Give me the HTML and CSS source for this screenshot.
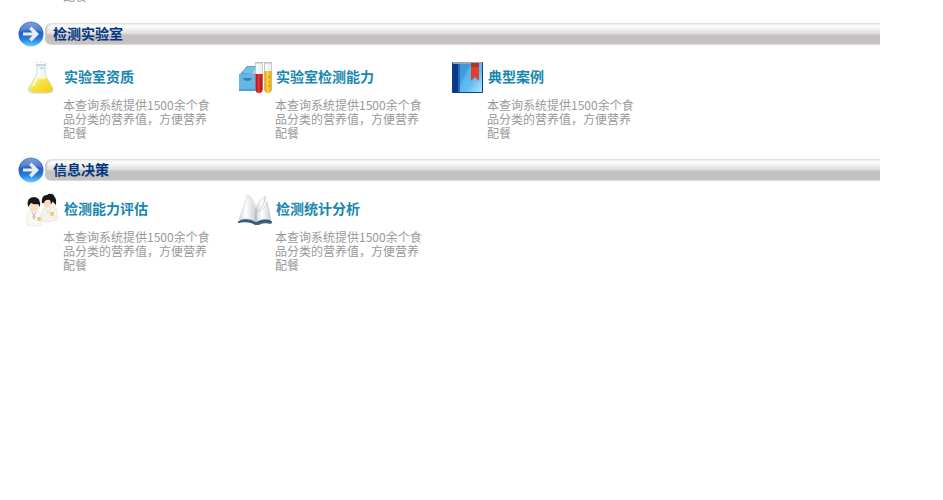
FILE: index.html
```html
<!DOCTYPE html>
<html lang="zh-CN">
<head>
<meta charset="utf-8">
<title>检测实验室</title>
<link rel="stylesheet" href="styles.css">
</head>
<body>
<svg class="defs" aria-hidden="true">
  <defs>
    <linearGradient id="blue" x1="0" y1="0" x2="0" y2="1"><stop offset="0" stop-color="#6b93d6"/><stop offset=".45" stop-color="#2460c4"/><stop offset=".7" stop-color="#247ce0"/><stop offset="1" stop-color="#62d4ff"/></linearGradient>
    <symbol id="arrow" viewBox="0 0 26 26">
      <circle cx="13" cy="13" r="12.5" fill="url(#blue)"/>
      <path d="M2 11C4 4 9 2 13 2s9 2 11 9c-6-3-16-3-22 0z" fill="#fff" opacity=".15"/>
      <path d="M5 11.500h9.500L11 8l2.500-2.500L21 13l-7.500 7.500L11 18l3.500-3.500H5z" fill="#e9edf8"/>
    </symbol>
  </defs>
</svg>
<main class="page">
  <p class="previous">配餐</p>

  <section class="section">
    <header class="head">
      <svg class="arrow" aria-hidden="true"><use href="#arrow"/></svg>
      <h2 class="bar">检测实验室</h2>
    </header>
    <div class="grid">
      <article class="card">
        <svg class="icon" viewBox="0 0 34 34" aria-hidden="true">
          <defs><linearGradient id="yellow" x1="0" y1="0" x2="1" y2="1"><stop offset="0" stop-color="#fff6a0"/><stop offset=".5" stop-color="#f6e03c"/><stop offset="1" stop-color="#f5cc12"/></linearGradient></defs>
          <ellipse cx="14" cy="30" rx="13" ry="2" fill="#f4efd5"/>
          <path d="M10 3v9L1.500 26q-1.500 4 3 4.500 9 1 18 0 4.500-.5 3-4.500L18 12V3z" fill="#f1f8f8" stroke="#c6dcdc"/>
          <path d="M7.500 16Q14 14 20 16l5.500 10q1 3.500-3 4-8 1-17 0-4.500-.5-3-4z" fill="url(#yellow)"/>
          <ellipse cx="14" cy="16" rx="6" ry="1.200" fill="#fff7ad"/>
          <path d="M9 3h10M11 6h6" stroke="#a4c4ca"/>
          <path d="M12 4v8L6 24" stroke="#fff" stroke-width="2" fill="none" opacity=".7"/>
          <path d="M9 .5h2m2-.5h2m2 1h3" stroke="#ddd"/>
        </svg>
        <div class="body"><h3><a href="#lab">实验室资质</a></h3><p>本查询系统提供1500余个食品分类的营养值，方便营养配餐</p></div>
      </article>
      <article class="card">
        <svg class="icon" viewBox="0 0 34 34" aria-hidden="true">
          <defs>
            <linearGradient id="red"><stop offset="0" stop-color="#a90d16"/><stop offset=".45" stop-color="#e33a35"/><stop offset="1" stop-color="#b90b13"/></linearGradient>
            <linearGradient id="gold"><stop offset="0" stop-color="#e69c05"/><stop offset=".45" stop-color="#ffd44b"/><stop offset="1" stop-color="#e7a310"/></linearGradient>
          </defs>
          <path d="M1 12L8 4h12v24H1z" fill="#4aa3db"/>
          <path d="M5 11l4-4h11v5z" fill="#d8c7a8"/>
          <path d="M4 9l5-4h9l-5 6H4z" fill="#75bfe9"/>
          <path d="M0 12h17v17H0z" fill="#65b6e7"/>
          <path d="M0 28h17" stroke="#388bc2"/>
          <path d="M4 16q1 3 4.500 3t4.500-3z" fill="#3780b2"/>
          <path d="M16.500 1v26q0 4 3.500 4t3.500-4V1z" fill="#eef2f3" stroke="#aebfc4" stroke-width=".7"/>
          <path d="M16.500 12h7v15q0 4-3.500 4t-3.500-4z" fill="url(#red)"/>
          <path d="M25.500 1v26q0 4 3.500 4t3.500-4V1z" fill="#eef2f3" stroke="#b8b8a5" stroke-width=".7"/>
          <path d="M25.500 9h7v18q0 4-3.500 4t-3.500-4z" fill="url(#gold)"/>
          <path d="M16 .5h8M25 .5h8" stroke="#b7c2c5"/>
          <path d="M18.500 2v9M27.500 2v7" stroke="#fff" stroke-width="1.500"/>
          <path d="M21 16v2m0 3v1m0 3v2M30 14v2m0 3v1m0 3v2" stroke="#642713" opacity=".4"/>
        </svg>
        <div class="body"><h3><a href="#ability">实验室检测能力</a></h3><p>本查询系统提供1500余个食品分类的营养值，方便营养配餐</p></div>
      </article>
      <article class="card">
        <svg class="icon" viewBox="0 0 34 34" aria-hidden="true">
          <defs><linearGradient id="book" x1="0" y1="0" x2="1" y2="1"><stop offset="0" stop-color="#4aa8e4"/><stop offset=".6" stop-color="#63bdf2"/><stop offset="1" stop-color="#b0e6ff"/></linearGradient></defs>
          <rect x="1" y="0" width="31" height="31" rx="1" fill="#0c4185"/>
          <path d="M2 0h29v2H2z" fill="#8fa6bd"/>
          <path d="M2 2h6v28H2z" fill="#0a3a87"/>
          <path d="M7 2h2v28H7z" fill="#2868b5"/>
          <path d="M9 2h22v28H9z" fill="url(#book)"/>
          <path d="M9 2h11L9 23z" fill="#247dca" opacity=".4"/>
          <path d="M20 1h8v18l-4-4-4 4z" fill="#df3f2c"/>
          <path d="M20 1h8v4h-8z" fill="#b82d24"/>
        </svg>
        <div class="body"><h3><a href="#cases">典型案例</a></h3><p>本查询系统提供1500余个食品分类的营养值，方便营养配餐</p></div>
      </article>
    </div>
  </section>

  <section class="section">
    <header class="head">
      <svg class="arrow" aria-hidden="true"><use href="#arrow"/></svg>
      <h2 class="bar">信息决策</h2>
    </header>
    <div class="grid compact">
      <article class="card">
        <svg class="icon" viewBox="0 0 34 34" aria-hidden="true">
          <path d="M15 27V17q1-4 5-4h5q5 0 5 5v8q-7 3-15 1z" fill="#f4f2eb" stroke="#dfddd8" stroke-width=".6"/>
          <path d="M26 2q4 1 3 9l-3-3z" fill="#171717"/>
          <ellipse cx="20.500" cy="8.500" rx="4.500" ry="5" fill="#f8dcc1"/>
          <path d="M15 9Q14 1 20 1q2-2 5-1 3 1 2 4-1 4-3 6l-1-4q-5-1-6 3z" fill="#171717"/>
          <path d="M19 14l2 5 2-5" fill="#fff" stroke="#c9c9c9" stroke-width=".6"/>
          <path d="M0 31V22q0-4 5-5h4q5 1 5 5v9q-7 2-14 0z" fill="#faf9f4" stroke="#dfddd8" stroke-width=".6"/>
          <ellipse cx="7" cy="12.500" rx="5" ry="5.500" fill="#f8dfc5"/>
          <path d="M1 13Q-1 3 7 3q7 0 6 10l-2-3q-4 1-7-1z" fill="#171717"/>
          <path d="M5 18l2 4 2-4M7 20v6M5 23h4" fill="none" stroke="#a7a7a7" stroke-width=".7"/>
          <circle cx="12" cy="25" r="2" fill="#eabf50"/><circle cx="25" cy="20" r="2" fill="#eabf50"/>
          <path d="M10.500 26l3-1M23.500 21l3-1" stroke="#fff1bb" stroke-width=".6"/>
        </svg>
        <div class="body"><h3><a href="#evaluation">检测能力评估</a></h3><p>本查询系统提供1500余个食品分类的营养值，方便营养配餐</p></div>
      </article>
      <article class="card">
        <svg class="icon" viewBox="0 0 34 34" aria-hidden="true">
          <defs><linearGradient id="leaf"><stop offset="0" stop-color="#d6d9dc"/><stop offset=".4" stop-color="#fff"/><stop offset="1" stop-color="#c7cdd2"/></linearGradient></defs>
          <path d="M-1 28l5-4h25l4 4-1 2q-8-2-12 1h-4q-6-4-17-2z" fill="#426985"/>
          <path d="M0 26L8 3q7 1 9 10v15q-7-5-17-2z" fill="url(#leaf)" stroke="#bdc2c6" stroke-width=".5"/>
          <path d="M8 3L6 0q10 2 11 13v14Q17 8 8 3z" fill="#e6e9eb"/>
          <path d="M17 28V14Q20 5 27 2l-2 6 3-1 4 19q-9-2-15 2z" fill="url(#leaf)" stroke="#bdc2c6" stroke-width=".5"/>
          <path d="M17 14v14" stroke="#9ca5ab" stroke-width=".8"/>
          <path d="M26 3q0 10-9 15 10-2 11-10" fill="#fafafa" stroke="#b5bbc0" stroke-width=".6"/>
          <path d="M-1 28q11-3 16 1h4q5-4 14-1" fill="none" stroke="#254d6a"/>
        </svg>
        <div class="body"><h3><a href="#statistics">检测统计分析</a></h3><p>本查询系统提供1500余个食品分类的营养值，方便营养配餐</p></div>
      </article>
    </div>
  </section>
</main>
</body>
</html>
```
FILE: styles.css
```css
* { box-sizing: border-box; }
html, body { margin: 0; }
body {
  background: #fff;
  color: #999;
  font: 12px/14px "Noto Sans CJK SC", sans-serif;
  overflow: hidden;
}
h2, h3, p { margin: 0; }
.defs { position: absolute; width: 0; height: 0; }
.page { display: flow-root; padding: 0 63px 0 18px; }
.previous { margin: -11px 0 18px 45px; }
.head { display: flex; align-items: center; gap: 1px; height: 26px; }
.arrow { flex: none; width: 26px; height: 26px; }
.bar {
  flex: 1;
  height: 22px;
  padding-left: 8px;
  border-top: 1px solid #e2dfdf;
  border-bottom: 1px solid #dcd8d8;
  border-radius: 6px 0 0 6px;
  background: linear-gradient(#fff, #fafafa 15%, #dddbdb 50%, #c6c2c2 54%, #c6c2c2);
  box-shadow: inset 2px 0 2px #c9c6c6;
  color: #003680;
  font-size: 14px;
  line-height: 18px;
}
.grid {
  display: grid;
  grid-template-columns: repeat(auto-fill, 212px);
  padding: 15px 0 17px 9px;
}
.compact { padding-top: 11px; }
.card { display: flex; align-items: flex-start; gap: 2px; }
.icon { flex: none; width: 34px; height: 34px; overflow: visible; }
.body { width: 150px; }
.body h3 { height: 36px; padding-left: 1px; font-size: 14px; line-height: 28px; }
.body a { color: #1787b0; text-decoration: none; }
```
